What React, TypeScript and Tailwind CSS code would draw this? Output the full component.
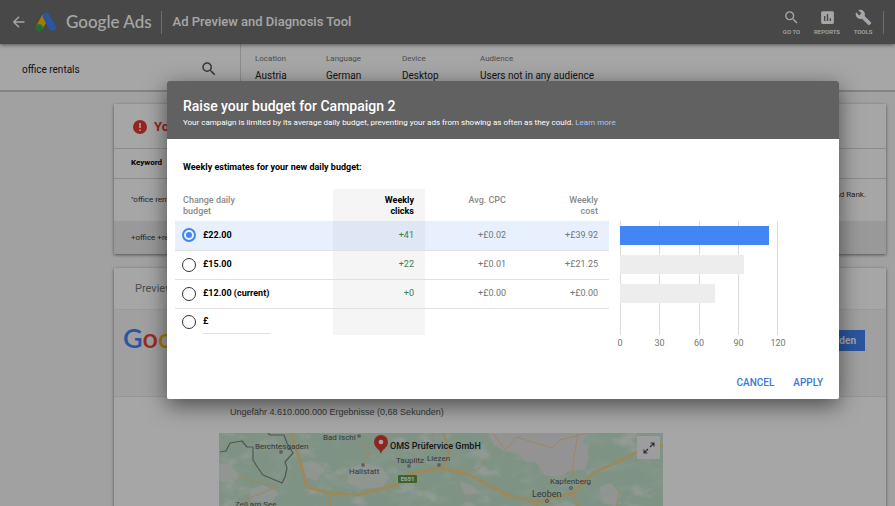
import React, { useState } from 'react';

interface BudgetOption {
    id: string;
    label: string;
    clicks: string;
    cpc: string;
    cost: string;
    value: number;
}

const OPTIONS: BudgetOption[] = [
    { id: '22', label: '£22.00', clicks: '+41', cpc: '+£0.02', cost: '+£39.92', value: 113 },
    { id: '15', label: '£15.00', clicks: '+22', cpc: '+£0.01', cost: '+£21.25', value: 94 },
    { id: '12', label: '£12.00 (current)', clicks: '+0', cpc: '+£0.00', cost: '+£0.00', value: 72 },
];

const TICKS = [0, 30, 60, 90, 120];

const FILTERS = [
    { label: 'Location', value: 'Austria', width: 'w-[71px]' },
    { label: 'Language', value: 'German', width: 'w-[76px]' },
    { label: 'Device', value: 'Desktop', width: 'w-[78px]' },
    { label: 'Audience', value: 'Users not in any audience', width: '' },
];

const SearchIcon: React.FC<{ className?: string }> = ({ className }) => (
    <svg viewBox="0 0 24 24" fill="currentColor" className={className} aria-hidden="true">
        <path d="M15.5 14h-.79l-.28-.27A6.47 6.47 0 0 0 16 9.5 6.5 6.5 0 1 0 9.5 16c1.61 0 3.09-.59 4.23-1.57l.27.28v.79l5 4.99L20.49 19l-4.99-5zm-6 0C7.01 14 5 11.99 5 9.5S7.01 5 9.5 5 14 7.01 14 9.5 11.99 14 9.5 14z" />
    </svg>
);

const ReportsIcon: React.FC = () => (
    <svg viewBox="0 0 24 24" fill="currentColor" className="size-[17px]" aria-hidden="true">
        <path d="M19 3H5c-1.1 0-2 .9-2 2v14c0 1.1.9 2 2 2h14c1.1 0 2-.9 2-2V5c0-1.1-.9-2-2-2zM9 17H7v-7h2v7zm4 0h-2V7h2v10zm4 0h-2v-4h2v4z" />
    </svg>
);

const ToolsIcon: React.FC = () => (
    <svg viewBox="0 0 24 24" fill="currentColor" className="size-[17px]" aria-hidden="true">
        <path d="M22.7 19l-9.1-9.1c.9-2.3.4-5-1.5-6.9-2-2-5-2.4-7.4-1.3L9 6 6 9 1.6 4.7C.4 7.1.9 10.1 2.9 12.1c1.9 1.9 4.6 2.4 6.9 1.5l9.1 9.1c.4.4 1 .4 1.4 0l2.3-2.3c.5-.4.5-1.1.1-1.4z" />
    </svg>
);

const AdsLogo: React.FC = () => (
    <svg viewBox="0 0 22 20" className="h-5 w-[22px]" aria-hidden="true">
        <path d="M4.200 15.800 10.600 4.200" stroke="#fbbc04" strokeWidth="7" />
        <path d="M11.200 4.200 17.400 15.400" stroke="#4285f4" strokeWidth="7" strokeLinecap="round" />
        <circle cx="4.200" cy="15.800" r="3.600" fill="#34a853" />
    </svg>
);

const TopBar: React.FC = () => (
    <header className="relative flex h-11 items-center bg-[#6f6f6f] pr-[11px] pl-[13px] text-white shadow-[0_1px_4px_rgba(0,0,0,0.5)]">
        <button type="button" aria-label="Back">
            <svg viewBox="0 0 12 12" fill="none" stroke="currentColor" strokeWidth="1.4" className="size-3" aria-hidden="true">
                <path d="M11.500 6H1M6 .8.8 6 6 11.200" />
            </svg>
        </button>
        <div className="ml-[10px] flex items-center gap-[9px]">
            <AdsLogo />
            <span className="font-['Lato'] text-[17px] leading-6 font-medium">Google Ads</span>
        </div>
        <div className="mr-[11px] ml-[9px] h-[23px] w-px bg-white/40" />
        <h1 className="text-[13px] font-medium">Ad Preview and Diagnosis Tool</h1>
        <nav className="ml-auto flex items-center text-[6px] font-medium">
            <button type="button" className="flex w-[35px] flex-col items-center gap-[3px]">
                <SearchIcon className="size-[17px]" />
                <span className="leading-[6px]">GO TO</span>
            </button>
            <button type="button" className="flex w-9 flex-col items-center gap-[3px]">
                <ReportsIcon />
                <span className="leading-[6px]">REPORTS</span>
            </button>
            <button type="button" className="flex w-9 flex-col items-center gap-[3px]">
                <ToolsIcon />
                <span className="leading-[6px]">TOOLS</span>
            </button>
            <div className="ml-[2px] h-[23px] w-px bg-white/40" />
        </nav>
    </header>
);

const FilterBar: React.FC = () => {
    const [query, setQuery] = useState('office rentals');

    return (
        <div className="flex h-12 border-b-2 border-[#cacaca] bg-white text-[10px] text-[#222]">
            <label className="flex w-[241px] items-center border-r border-[#d8d8d8] px-[22px] pt-1">
                <input
                    aria-label="Search term"
                    value={query}
                    onChange={e => setQuery(e.target.value)}
                    className="min-w-0 flex-1 bg-transparent outline-none"
                />
                <SearchIcon className="size-[18px] text-[#555]" />
            </label>
            <dl className="flex pt-2 pl-[14px]">
                {FILTERS.map(filter => (
                    <div key={filter.label} className={filter.width}>
                        <dt className="text-[8px] leading-[13px] text-[#777]">{filter.label}</dt>
                        <dd className="mt-[3px] leading-4 whitespace-nowrap">{filter.value}</dd>
                    </div>
                ))}
            </dl>
        </div>
    );
};

const KeywordCard: React.FC = () => (
    <section className="bg-white shadow-[0_1px_3px_rgba(0,0,0,0.5)]">
        <div className="flex h-[45px] items-center gap-[7px] border-b border-[#d8d8d8] pt-[2px] pl-[19px] text-[#e53935]">
            <svg viewBox="0 0 14 14" className="size-[14px]" aria-hidden="true">
                <circle cx="7" cy="7" r="7" fill="currentColor" />
                <path d="M7 3v5M7 9.400v1.600" stroke="#fff" strokeWidth="1.600" />
            </svg>
            <h2 className="text-[13px] font-bold">Your ads are not showing</h2>
        </div>
        <table className="w-full text-left text-[8px] text-[#333]">
            <thead>
                <tr className="h-[29px] border-b border-[#d8d8d8]">
                    <th className="pl-[17px] font-bold text-black">Keyword</th>
                    <th />
                </tr>
            </thead>
            <tbody>
                <tr className="h-[43px]">
                    <td className="pl-[17px]">"office rentals"</td>
                    <td className="pr-5 pb-[10px] text-right">Low Ad Rank.</td>
                </tr>
                <tr className="h-[33px] bg-[#ebebeb]">
                    <td className="pl-[17px]">+office +rentals</td>
                    <td />
                </tr>
            </tbody>
        </table>
    </section>
);

const ResultMap: React.FC = () => (
    <div className="relative h-[120px] w-[444px] overflow-hidden bg-[#c5e3cd]">
        <svg viewBox="0 0 444 120" className="block size-full" preserveAspectRatio="xMidYMid slice" aria-hidden="true">
            <defs>
                <filter id="rock" x="0" y="0" width="100%" height="100%">
                    <feTurbulence type="fractalNoise" baseFrequency="0.04 0.06" numOctaves="4" seed="7" />
                    <feColorMatrix values="0 0 0 0 0.93  0 0 0 0 0.93  0 0 0 0 0.93  5 0 0 0 -2.900" />
                </filter>
                <filter id="shade" x="0" y="0" width="100%" height="100%">
                    <feTurbulence type="fractalNoise" baseFrequency="0.04 0.07" numOctaves="3" seed="3" />
                    <feColorMatrix values="0 0 0 0 0.66  0 0 0 0 0.84  0 0 0 0 0.72  0 4 0 0 -2" />
                </filter>
            </defs>
            <rect width="444" height="120" fill="#c3e2cc" />
            <rect width="444" height="120" filter="url(#shade)" opacity="0.4" />
            <rect width="444" height="120" filter="url(#rock)" opacity="0.5" />
            <path d="M269 0L275 12 285 18 300 20 305 28 318 30 325 42 340 44 350 38 366 36 370 25 364 8 369 0z" fill="#e4e2e4" />
            <path d="M130 36L144 30 162 34 170 44 164 54 142 56 128 50zM0 30L12 32 20 42 14 50 0 48zM82 30L94 28 106 36 98 48 86 44zM30 56L44 52 60 60 52 70 32 68zM380 54L392 50 402 62 396 73 384 70zM240 48L252 52 262 60 246 62z" fill="#e2e6e2" opacity="0.8" />
            <g fill="none" stroke="#efd28c" strokeLinejoin="round" strokeLinecap="round">
                <path d="M72 0L81 27 88 54 111 60 138 62 178 52 191 41 221 35 251 42 288 62 318 69 354 60 374 40 403 27 421 17 444 12" strokeWidth="3" />
                <path d="M224 0L231 17 224 34M111 60L112 120M354 60L359 73 352 120M318 69L314 120" strokeWidth="2" />
                <path d="M274 0L286 17 298 4 316 10 334 15 341 7 368 0M359 0L354 30 353 44M21 44L40 50 58 54 28 66M142 8L150 20 146 30M231 38L260 36 266 26M400 60L396 80" strokeWidth="1" />
            </g>
            <path d="M1 19L7 18 11 10 23 8 28 14 34 14 34 27 39 35 44 42 63 50 66 44 68 35 66 29 74 20 68 10 65 2 51 2 49 0" fill="none" stroke="#7c8580" strokeWidth="1.200" strokeLinejoin="round" />
            <g fill="none" stroke="#777">
                <rect x="61" y="18" width="2" height="2" />
                <rect x="139" y="2" width="2" height="2" />
                <rect x="143" y="31" width="2" height="2" />
                <rect x="189" y="32" width="2" height="2" />
                <rect x="219" y="31" width="2" height="2" />
                <circle cx="328" cy="68" r="1.500" />
                <circle cx="352" cy="55" r="1.500" />
            </g>
            <g className="font-['Roboto']" fontSize="8" fill="#555">
                <text x="36" y="16">Berchtesgaden</text>
                <text x="104" y="7">Bad Ischl</text>
                <text x="130" y="41">Hallstatt</text>
                <text x="177" y="30">Tauplitz</text>
                <text x="208" y="28">Liezen</text>
                <text x="16" y="74">Zell am See</text>
                <text x="331" y="51">Kapfenberg</text>
                <text x="313" y="64" fontSize="9">Leoben</text>
            </g>
            <rect x="179" y="42" width="19" height="8" rx="1" fill="#5f9a3c" />
            <text x="188.500" y="48" className="font-['Roboto']" fontSize="6" fontWeight="700" fill="#fff" textAnchor="middle">E651</text>
            <path d="M162 21c-1-5-7-6-7-12a6.500 6.500 0 0 1 14 0c0 6-6 7-7 12z" fill="#d93a35" />
            <circle cx="162" cy="9" r="2.300" fill="#fff" />
            <text x="171" y="16" className="font-['Roboto']" fontSize="9" fontWeight="500" fill="#222">OMS Prüfervice GmbH</text>
        </svg>
        <button type="button" aria-label="Expand map" className="absolute top-[3px] right-[3px] flex size-[23px] items-center justify-center bg-[#f2f2f2]">
            <svg viewBox="0 0 12 12" fill="none" stroke="#444" strokeWidth="1.100" className="size-3" aria-hidden="true">
                <path d="M7 5l4-4M7.500 1H11v3.500M5 7l-4 4M1 7.500V11h3.500" />
            </svg>
        </button>
    </div>
);

const PreviewCard: React.FC = () => (
    <section className="bg-white shadow-[0_1px_3px_rgba(0,0,0,0.5)]">
        <h2 className="h-[42px] border-b border-[#ececec] pl-[21px] text-[11px] leading-[42px] text-[#777]">Preview</h2>
        <div className="flex h-[87px] items-start justify-between border-b border-[#e6e6e6] bg-[#f6f6f6] pr-[21px] pl-[9px]">
            <div className="pt-[10px] font-['Lato'] text-[27px] leading-9 font-semibold">
                <span className="text-[#4285f4]">G</span>
                <span className="text-[#ea4335]">o</span>
                <span className="text-[#fbbc05]">o</span>
                <span className="text-[#4285f4]">g</span>
                <span className="text-[#34a853]">l</span>
                <span className="text-[#ea4335]">e</span>
            </div>
            <button type="button" className="mt-5 h-[21px] bg-[#4285f4] px-[9px] text-[10px] font-bold text-white">Anmelden</button>
        </div>
        <div className="pl-[105px]">
            <p className="pt-[7px] pb-[13px] pl-[11px] font-['Liberation_Sans'] text-[9px] leading-4 text-[#555]">
                Ungefähr 4.610.000.000 Ergebnisse (0,68 Sekunden)
            </p>
            <ResultMap />
        </div>
    </section>
);

const radioClass =
    'size-[14px] shrink-0 appearance-none rounded-full border border-[#333] bg-clip-content p-[2px] checked:border-2 checked:border-[#4285f4] checked:bg-[#4285f4]';

const EstimatesTable: React.FC<{ selected: string; onSelect: (id: string) => void }> = ({ selected, onSelect }) => {
    const [custom, setCustom] = useState('');

    return (
        <table className="w-full table-fixed text-right text-[9px] text-[#757575]">
            <colgroup>
                <col />
                <col className="w-[92px]" />
                <col className="w-[92px]" />
                <col className="w-[92px]" />
            </colgroup>
            <thead>
                <tr className="h-8 align-top leading-[11px] text-[#8a8a8a]">
                    <th className="pt-[6px] pl-2 text-left font-medium">Change daily<br />budget</th>
                    <th className="bg-[#f5f5f5] pt-[6px] pr-[11px] font-bold text-black">Weekly<br />clicks</th>
                    <th className="pt-[6px] pr-[11px] font-medium">Avg. CPC</th>
                    <th className="pt-[6px] pr-[11px] font-medium">Weekly<br />cost</th>
                </tr>
            </thead>
            <tbody>
                {OPTIONS.map(option => {
                    const active = option.id === selected;
                    return (
                        <tr key={option.id} className={`h-[29px] border-b border-[#e0e0e0] ${active ? 'bg-[#e8f0fd]' : ''}`}>
                            <td className="pl-[7px] text-left">
                                <label className="flex items-center gap-[7px] font-bold text-black">
                                    <input
                                        type="radio"
                                        name="budget"
                                        checked={active}
                                        onChange={() => onSelect(option.id)}
                                        className={radioClass}
                                    />
                                    {option.label}
                                </label>
                            </td>
                            <td className={`pr-[11px] text-[#3f7d54] ${active ? 'bg-[#dee7f3]' : 'bg-[#f5f5f5]'}`}>{option.clicks}</td>
                            <td className="pr-[11px]">{option.cpc}</td>
                            <td className="pr-[11px]">{option.cost}</td>
                        </tr>
                    );
                })}
                <tr className="h-[27px]">
                    <td className="pl-[7px] text-left">
                        <div className="flex items-center gap-[7px] text-black">
                            <input
                                type="radio"
                                name="budget"
                                aria-label="Custom budget"
                                checked={selected === 'custom'}
                                onChange={() => onSelect('custom')}
                                className={radioClass}
                            />
                            <div className="flex h-6 w-[67px] items-center gap-1 border-b border-[#e0e0e0] font-bold">
                                <label htmlFor="custom-amount">£</label>
                                <input
                                    id="custom-amount"
                                    value={custom}
                                    onChange={e => setCustom(e.target.value)}
                                    className="min-w-0 flex-1 bg-transparent outline-none"
                                />
                            </div>
                        </div>
                    </td>
                    <td className="bg-[#f5f5f5]" />
                    <td />
                    <td />
                </tr>
            </tbody>
        </table>
    );
};

const EstimatesChart: React.FC<{ selected: string }> = ({ selected }) => (
    <div className="mr-[61px] w-[158px] shrink-0 pt-8">
        <div className="relative h-[114px]">
            <div className="absolute inset-0 flex justify-between">
                {TICKS.map(tick => <div key={tick} className="w-px bg-[#dcdcdc]" />)}
            </div>
            <div className="relative flex flex-col gap-[10px] pt-[5px]">
                {OPTIONS.map(option => (
                    <div
                        key={option.id}
                        className={`h-[19px] ${option.id === selected ? 'bg-[#4285f4]' : 'bg-[#ededed]'}`}
                        style={{ width: `${(option.value / 120) * 100}%` }}
                    />
                ))}
            </div>
        </div>
        <div className="-mx-[10px] flex justify-between pt-[2px] text-[9px] leading-3 text-[#757575]">
            {TICKS.map(tick => <span key={tick} className="w-5 text-center">{tick}</span>)}
        </div>
    </div>
);

const BudgetDialog: React.FC = () => {
    const [selected, setSelected] = useState('22');

    return (
        <div className="absolute inset-0 bg-black/35 pt-[81px] pr-14 pl-[167px]">
            <div role="dialog" aria-labelledby="dialog-title" className="overflow-hidden rounded-[2px] bg-white shadow-[0_6px_22px_rgba(0,0,0,0.55)]">
                <div className="bg-[#616161] pt-4 pb-2 pl-4 text-white">
                    <h2 id="dialog-title" className="text-[14px] leading-[18px] font-medium">Raise your budget for Campaign 2</h2>
                    <p className="text-[8px] leading-4">
                        Your campaign is limited by its average daily budget, preventing your ads from showing as often as they could.{' '}
                        <a href="#" className="text-[#a9c7fa]">Learn more</a>
                    </p>
                </div>
                <div className="pt-5 pl-2">
                    <h3 className="pl-2 text-[9px] leading-4 font-bold text-black">Weekly estimates for your new daily budget:</h3>
                    <div className="mt-[14px] flex gap-[11px]">
                        <div className="min-w-0 flex-1">
                            <EstimatesTable selected={selected} onSelect={setSelected} />
                        </div>
                        <EstimatesChart selected={selected} />
                    </div>
                </div>
                <div className="flex justify-end gap-[19px] pt-[26px] pr-4 pb-2 text-[10px] leading-4 font-medium text-[#3b78d8]">
                    <button type="button">CANCEL</button>
                    <button type="button">APPLY</button>
                </div>
            </div>
        </div>
    );
};

const App: React.FC = () => (
    <div className="relative h-screen overflow-hidden bg-[#f7f7f7] font-['Roboto',sans-serif]">
        <TopBar />
        <FilterBar />
        <main className="flex flex-col gap-[14px] pt-3 pr-[9px] pl-[114px]">
            <KeywordCard />
            <PreviewCard />
        </main>
        <BudgetDialog />
    </div>
);

export default App;
